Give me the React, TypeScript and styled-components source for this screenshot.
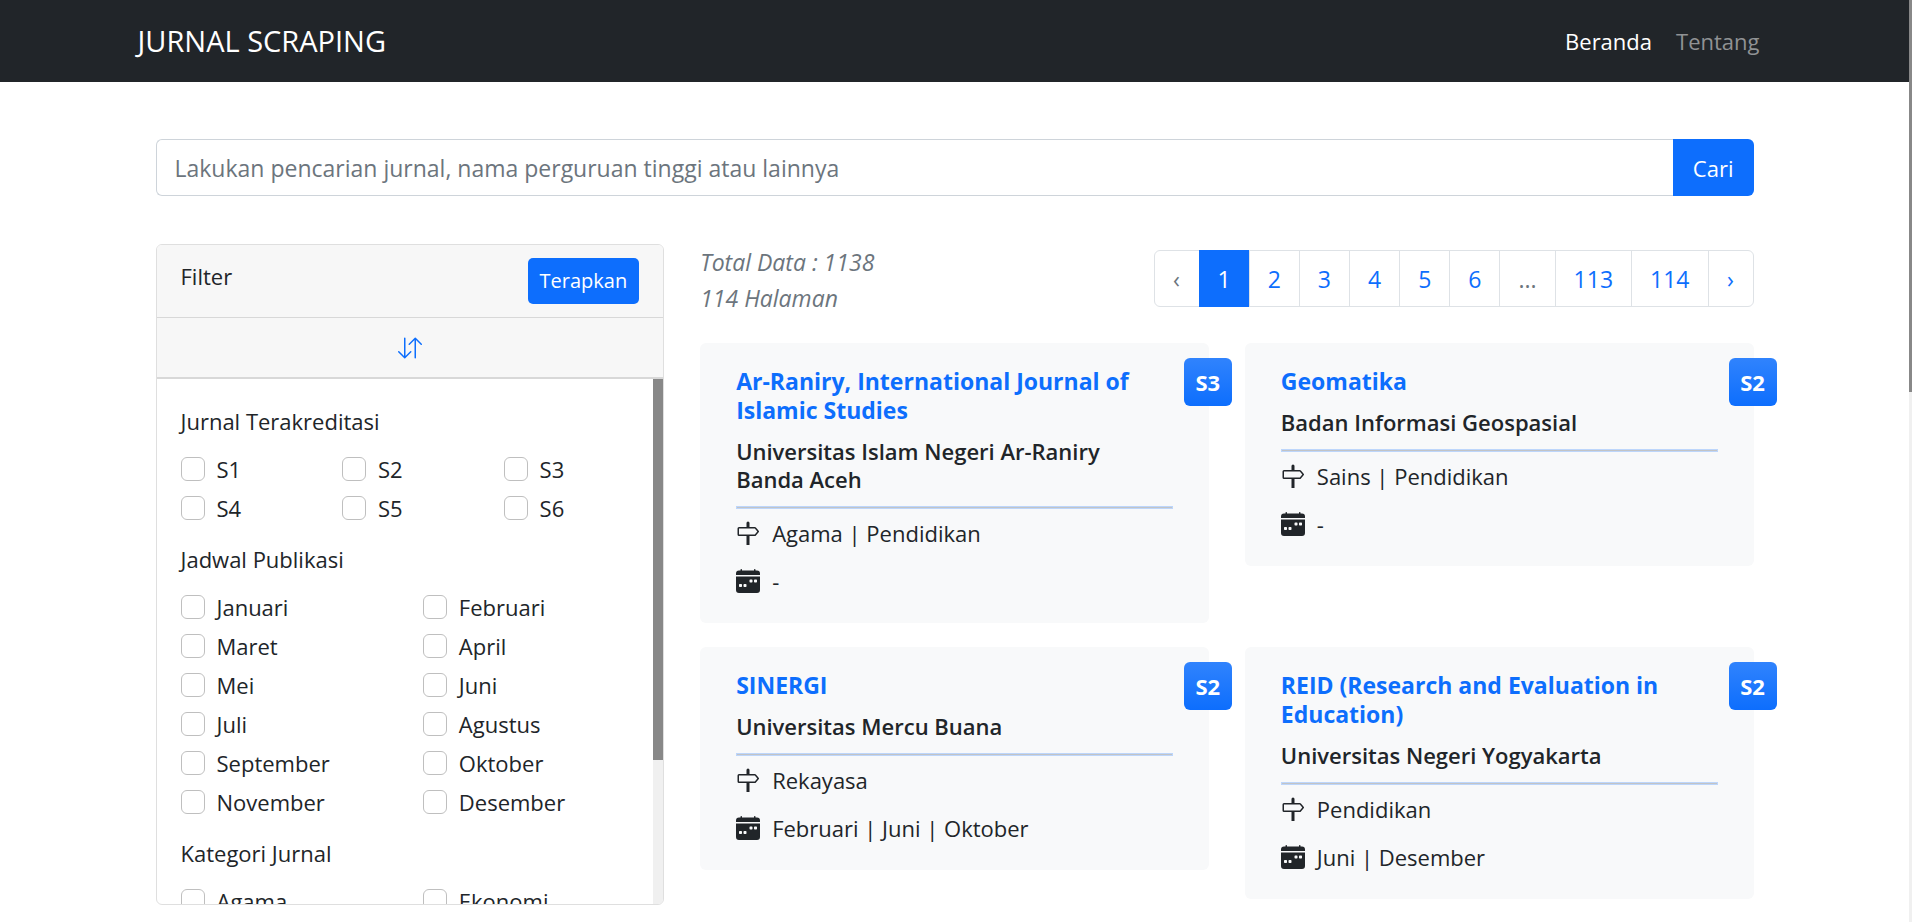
import React from "react";
import styled, { createGlobalStyle, css } from "styled-components";
import { BsArrowDownUp, BsCalendarWeekFill, BsSignpost } from "react-icons/bs";

const GlobalStyle = createGlobalStyle`
  *, *::before, *::after { box-sizing: border-box; }
  body {
    margin: 0;
    background: #fff;
    color: #212529;
    font-family: "Open Sans", "Noto Sans", sans-serif;
    font-size: 22px;
    line-height: 36px;
  }
  h1, h2, h3, p, ul, fieldset { margin: 0; padding: 0; border: 0; }
  ul { list-style: none; }
  a { color: #0d6efd; text-decoration: none; }
  button, input { font: inherit; }
`;

const Page = styled.div`
  min-height: 100vh;
  padding-right: 3px;
`;

const PageTrack = styled.div`
  position: fixed;
  top: 0;
  right: 0;
  bottom: 0;
  width: 3px;
  background: #f0f0f0;
`;

const PageThumb = styled.div`
  height: 42.5%;
  background: #888;
`;

const Navbar = styled.header`
  background: #212529;
`;

const NavInner = styled.div`
  display: flex;
  align-items: center;
  justify-content: space-between;
  max-width: 1670px;
  height: 82px;
  margin: 0 auto;
  padding: 0 30px 0 18px;
`;

const Brand = styled.a`
  color: #fff;
  font-size: 29px;
`;

const NavLinks = styled.nav`
  display: flex;
  gap: 24px;
`;

const NavLink = styled.a<{ $active?: boolean }>`
  color: ${(p) => (p.$active ? "#fff" : "#909294")};
`;

const Main = styled.main`
  max-width: 1670px;
  margin: 0 auto;
  padding: 57px 36px 24px;
`;

const SearchForm = styled.form`
  display: flex;
  height: 57px;
`;

const SearchInput = styled.input`
  flex: 1;
  min-width: 0;
  padding: 1px 18px 0;
  font-size: 23px;
  border: 1px solid #ced4da;
  border-right: 0;
  border-radius: 6px 0 0 6px;
  color: #212529;
  outline: 0;
  &::placeholder { color: #6c757d; opacity: 1; }
`;

const Button = styled.button<{ $small?: boolean }>`
  border: 0;
  background: #0d6efd;
  color: #fff;
  cursor: pointer;
  ${(p) =>
    p.$small
      ? css`
          height: 46px;
          padding: 0 12px;
          border-radius: 5px;
          font-size: 20px;
        `
      : css`
          padding: 0 20px;
          border-radius: 0 6px 6px 0;
        `}
`;

const Content = styled.div`
  display: grid;
  grid-template-columns: repeat(3, minmax(0, 1fr));
  column-gap: 36px;
  align-items: start;
  margin-top: 48px;
`;

const FilterCard = styled.aside`
  overflow: hidden;
  border: 1px solid #dfdfdf;
  border-radius: 6px;
`;

const FilterHeader = styled.div`
  display: flex;
  justify-content: space-between;
  align-items: flex-start;
  padding: 13px 24px;
  background: #f7f7f7;
  border-bottom: 1px solid #d8d8d8;
`;

const SortButton = styled.button`
  display: flex;
  align-items: center;
  justify-content: center;
  width: 100%;
  height: 61px;
  border: 0;
  border-bottom: 2px solid #d8d8d8;
  background: #f7f7f7;
  color: #0d6efd;
  cursor: pointer;
`;

const FilterBody = styled.div`
  display: flex;
  height: calc(100vh - 397px);
`;

const FilterScroll = styled.div`
  flex: 1;
  overflow-y: auto;
  scrollbar-width: none;
  padding: 24px;
`;

const FilterTrack = styled.div`
  width: 10px;
  background: #f0f0f0;
`;

const FilterThumb = styled.div`
  height: 72.5%;
  background: #888;
`;

const Group = styled.fieldset`
  min-width: 0;
  margin-bottom: 12px;
`;

const GroupTitle = styled.legend`
  padding: 0;
  margin-bottom: 12px;
`;

const Options = styled.div<{ $columns: number }>`
  display: grid;
  grid-template-columns: repeat(${(p) => p.$columns}, minmax(0, 1fr));
  column-gap: 36px;
`;

const Option = styled.label`
  display: flex;
  align-items: center;
  gap: 12px;
  padding-bottom: 3px;
`;

const Checkbox = styled.input`
  appearance: none;
  flex: none;
  width: 24px;
  height: 24px;
  margin: 0;
  border: 1px solid #bfbfbf;
  border-radius: 6px;
  background: #fff;
  &:checked { background: #0d6efd; border-color: #0d6efd; }
`;

const Results = styled.section`
  grid-column: span 2;
`;

const ResultsHeader = styled.div`
  display: flex;
  justify-content: space-between;
  align-items: flex-start;
  margin-bottom: 27px;
`;

const Summary = styled.p`
  color: #6c757d;
  font-size: 23px;
  font-style: italic;
`;

const Pagination = styled.ul`
  display: flex;
  margin-top: 6px;
  font-size: 23px;
`;

const PageItem = styled.li`
  & + & { margin-left: -1px; }
  &:first-child > * { border-radius: 6px 0 0 6px; }
  &:last-child > * { border-radius: 0 6px 6px 0; }
`;

const PageLink = styled.a<{ $active?: boolean; $muted?: boolean }>`
  display: block;
  min-width: 46px;
  padding: 11px 18px 9px;
  line-height: 35px;
  text-align: center;
  border: 1px solid #dee2e6;
  color: ${(p) => (p.$active ? "#fff" : p.$muted ? "#6c757d" : "#0d6efd")};
  ${(p) => p.$active && css`background: #0d6efd; border-color: #0d6efd;`}
`;

const CardGrid = styled.div`
  display: grid;
  grid-template-columns: repeat(2, minmax(0, 1fr));
  gap: 24px 36px;
  align-items: start;
`;

const Card = styled.article`
  position: relative;
  padding: 24px 36px;
  border-radius: 6px;
  background: #f8f9fa;
`;

const Badge = styled.span`
  position: absolute;
  top: 15px;
  right: -23px;
  width: 48px;
  border-radius: 6px;
  background: linear-gradient(#3083fd, #0d6efd);
  color: #fff;
  font-weight: 700;
  line-height: 48px;
  text-align: center;
`;

const CardTitle = styled.h2`
  margin-bottom: 12px;
  font-size: 23px;
  font-weight: 700;
  line-height: 29px;
`;

const Institution = styled.h3`
  font-size: 22px;
  font-weight: 600;
  line-height: 28px;
`;

const Divider = styled.hr`
  height: 3px;
  margin: 13px 0 6px;
  border: 1px solid #bdd6fb;
  background: #c2c4c6;
`;

const Detail = styled.p`
  display: flex;
  align-items: center;
  gap: 12px;
  & + & { margin-top: 12px; }
`;

const filters = [
  { title: "Jurnal Terakreditasi", columns: 3, options: ["S1", "S2", "S3", "S4", "S5", "S6"] },
  {
    title: "Jadwal Publikasi",
    columns: 2,
    options: [
      "Januari", "Februari", "Maret", "April", "Mei", "Juni",
      "Juli", "Agustus", "September", "Oktober", "November", "Desember",
    ],
  },
  { title: "Kategori Jurnal", columns: 2, options: ["Agama", "Ekonomi"] },
];

const journals = [
  {
    title: "Ar-Raniry, International Journal of Islamic Studies",
    institution: "Universitas Islam Negeri Ar-Raniry Banda Aceh",
    fields: "Agama | Pendidikan",
    schedule: "-",
    rank: "S3",
  },
  {
    title: "Geomatika",
    institution: "Badan Informasi Geospasial",
    fields: "Sains | Pendidikan",
    schedule: "-",
    rank: "S2",
  },
  {
    title: "SINERGI",
    institution: "Universitas Mercu Buana",
    fields: "Rekayasa",
    schedule: "Februari | Juni | Oktober",
    rank: "S2",
  },
  {
    title: "REID (Research and Evaluation in Education)",
    institution: "Universitas Negeri Yogyakarta",
    fields: "Pendidikan",
    schedule: "Juni | Desember",
    rank: "S2",
  },
];

const pages = ["‹", "1", "2", "3", "4", "5", "6", "...", "113", "114", "›"];

export default function App() {
  return (
    <Page>
      <GlobalStyle />
      <Navbar>
        <NavInner>
          <Brand href="#">JURNAL SCRAPING</Brand>
          <NavLinks>
            <NavLink href="#" $active>Beranda</NavLink>
            <NavLink href="#">Tentang</NavLink>
          </NavLinks>
        </NavInner>
      </Navbar>

      <Main>
        <SearchForm onSubmit={(e) => e.preventDefault()}>
          <SearchInput
            type="text"
            aria-label="Cari jurnal"
            placeholder="Lakukan pencarian jurnal, nama perguruan tinggi atau lainnya"
          />
          <Button type="submit">Cari</Button>
        </SearchForm>

        <Content>
          <FilterCard>
            <FilterHeader>
              <span>Filter</span>
              <Button type="button" $small>Terapkan</Button>
            </FilterHeader>
            <SortButton type="button" aria-label="Urutkan">
              <BsArrowDownUp size={24} />
            </SortButton>
            <FilterBody>
              <FilterScroll>
                {filters.map((group) => (
                  <Group key={group.title}>
                    <GroupTitle>{group.title}</GroupTitle>
                    <Options $columns={group.columns}>
                      {group.options.map((option) => (
                        <Option key={option}>
                          <Checkbox type="checkbox" />
                          {option}
                        </Option>
                      ))}
                    </Options>
                  </Group>
                ))}
              </FilterScroll>
              <FilterTrack aria-hidden>
                <FilterThumb />
              </FilterTrack>
            </FilterBody>
          </FilterCard>

          <Results>
            <ResultsHeader>
              <Summary>
                Total Data : 1138
                <br />
                114 Halaman
              </Summary>
              <Pagination>
                {pages.map((label) => (
                  <PageItem key={label}>
                    <PageLink
                      href="#"
                      $active={label === "1"}
                      $muted={label === "‹" || label === "..."}
                    >
                      {label}
                    </PageLink>
                  </PageItem>
                ))}
              </Pagination>
            </ResultsHeader>

            <CardGrid>
              {journals.map((journal) => (
                <Card key={journal.title}>
                  <Badge>{journal.rank}</Badge>
                  <CardTitle>
                    <a href="#">{journal.title}</a>
                  </CardTitle>
                  <Institution>{journal.institution}</Institution>
                  <Divider />
                  <Detail>
                    <BsSignpost size={24} />
                    {journal.fields}
                  </Detail>
                  <Detail>
                    <BsCalendarWeekFill size={24} />
                    {journal.schedule}
                  </Detail>
                </Card>
              ))}
            </CardGrid>
          </Results>
        </Content>
      </Main>
      <PageTrack aria-hidden>
        <PageThumb />
      </PageTrack>
    </Page>
  );
}
